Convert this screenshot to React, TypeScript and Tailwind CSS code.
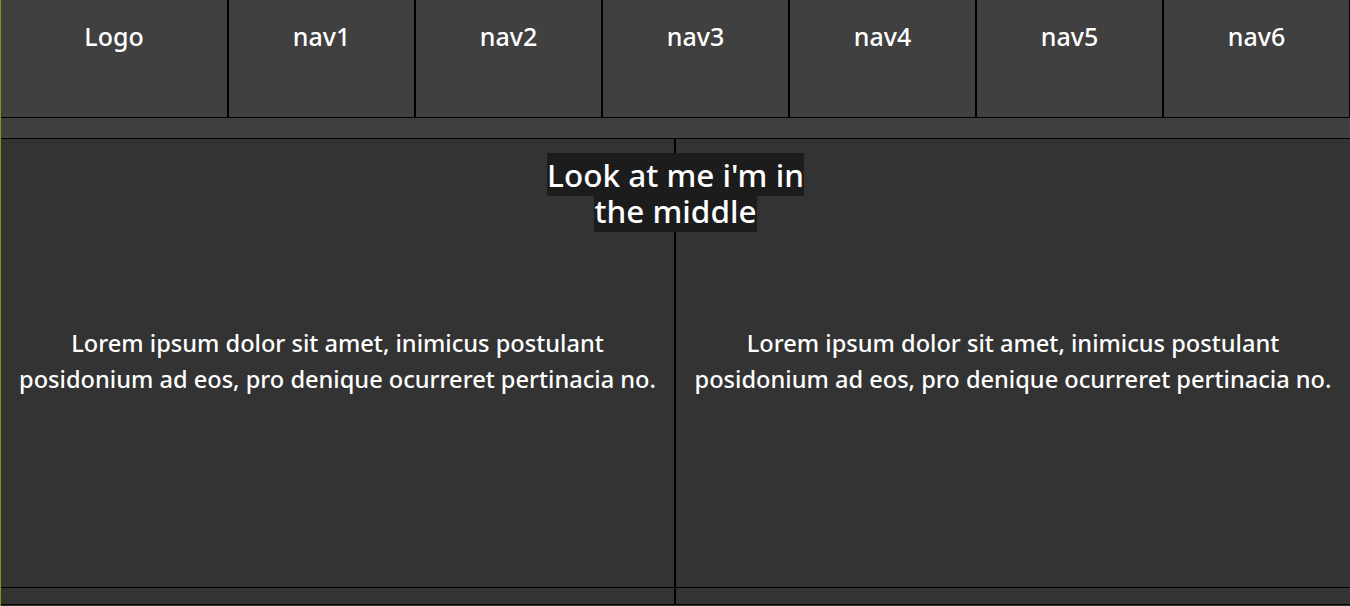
const navs = ['nav1', 'nav2', 'nav3', 'nav4', 'nav5', 'nav6'];

const lorem =
  'Lorem ipsum dolor sit amet, inimicus postulant posidonium ad eos, pro denique ocurreret pertinacia no.';

export default function App() {
  return (
    <div
      className="h-[606px] overflow-hidden bg-[#333333] border-l border-[#6f9e1c] text-white"
      style={{ fontFamily: '"Noto Sans", "Open Sans", sans-serif' }}
    >
      {/* header */}
      <header className="flex h-[118px] bg-[#404040] border-b border-black border-r">
        <div className="w-[228px] border-r-2 border-black pt-[19px] text-center text-[25px] font-medium leading-[35px]">
          Logo
        </div>
        {navs.map((n, i) => (
          <div
            key={n}
            className={
              'flex-1 pt-[19px] text-center text-[25px] font-medium leading-[35px] ' +
              (i < navs.length - 1 ? 'border-r-2 border-black' : '')
            }
          >
            {n}
          </div>
        ))}
      </header>

      {/* strip */}
      <div className="h-[21px] bg-[#404040] border-b border-black" />

      {/* main */}
      <main className="relative grid grid-cols-[675px_1fr] h-[449px] border-b border-black">
        <div className="flex items-center justify-center border-r-2 border-black px-2 pb-[4px] text-center text-[23.6px] font-medium leading-[36px]">
          <p>{lorem}</p>
        </div>
        <div className="flex items-center justify-center px-2 pb-[4px] text-center text-[23.6px] font-medium leading-[36px]">
          <p>{lorem}</p>
        </div>
        <div className="absolute left-0 right-0 top-[18px] flex justify-center">
          <h1 className="w-[290px] text-center text-[31.5px] font-medium leading-[36px]">
            <span className="bg-[#1c1c1c] box-decoration-clone">Look at me i'm in the middle</span>
          </h1>
        </div>
      </main>

      {/* footer */}
      <footer className="grid grid-cols-[675px_1fr] h-[17px] border-b border-black">
        <div className="border-r-2 border-black" />
        <div />
      </footer>
    </div>
  );
}
